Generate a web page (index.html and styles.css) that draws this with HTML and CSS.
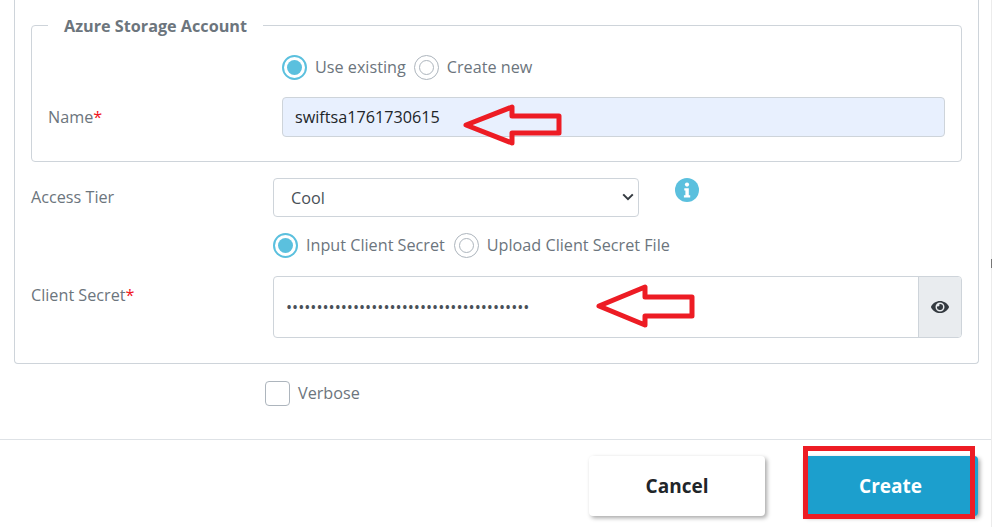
FILE: index.html
```html
<!DOCTYPE html>
<html lang="en">
<head>
<meta charset="utf-8">
<title>Azure Storage Account</title>
<link rel="stylesheet" href="styles.css">
</head>
<body>
<div class="page">
  <form class="panel">
    <fieldset class="group">
      <legend class="group-title">Azure Storage Account</legend>
      <div class="row radios radios-inner">
        <label class="radio"><span class="dot on"></span>Use existing</label>
        <label class="radio"><span class="dot"></span>Create new</label>
      </div>
      <div class="row name-row">
        <span class="label name-label">Name<span class="req">*</span></span>
        <div class="field filled">swiftsa1761730615</div>
      </div>
    </fieldset>
    <div class="row tier-row">
      <span class="label tier-label">Access Tier</span>
      <div class="select">Cool
        <svg class="chev" viewBox="0 0 12 8" width="12" height="8"><path d="M1.2 1.4 6 6.2l4.8-4.8" fill="none" stroke="#343a40" stroke-width="2"/></svg>
      </div>
      <svg class="info" viewBox="0 0 24 24" width="24" height="24"><circle cx="12" cy="12" r="12" fill="#5bc0de"/><circle cx="12" cy="6.6" r="2.1" fill="#fff"/><path d="M9.3 10.2h4.5v7h1.4v2.2H8.9v-2.2h1.5v-4.8H9.3z" fill="#fff"/></svg>
    </div>
    <div class="row radios radios-outer">
      <label class="radio"><span class="dot on"></span>Input Client Secret</label>
      <label class="radio"><span class="dot"></span>Upload Client Secret File</label>
    </div>
    <div class="row secret-row">
      <span class="label secret-label">Client Secret<span class="req">*</span></span>
      <div class="input-group">
        <div class="secret">••••••••••••••••••••••••••••••••••••••••</div>
        <div class="addon">
          <svg viewBox="0 0 576 512" width="18" height="16"><path fill="#343a40" d="M572.5 241.4C518.3 135.6 410.9 64 288 64S57.7 135.6 3.5 241.4a32.4 32.4 0 0 0 0 29.2C57.7 376.4 165.1 448 288 448s230.3-71.6 284.5-177.4a32.4 32.4 0 0 0 0-29.2zM288 400a144 144 0 1 1 144-144 143.9 143.9 0 0 1-144 144zm0-240a95.3 95.3 0 0 0-25.3 3.8 47.9 47.9 0 0 1-66.9 66.9A95.8 95.8 0 1 0 288 160z"/></svg>
        </div>
      </div>
    </div>
  </form>
  <div class="verbose">
    <span class="check"></span><span class="verbose-text">Verbose</span>
  </div>
  <footer class="footer">
    <button type="button" class="btn cancel">Cancel</button>
    <button type="button" class="btn create">Create</button>
  </footer>
  <svg class="arrow arrow-name" viewBox="0 0 110 50" width="110" height="50"><path d="M6 25 52 7v9h47v17H52v10z" fill="none" stroke="#ed1c24" stroke-width="5" stroke-linejoin="round"/></svg>
  <svg class="arrow arrow-secret" viewBox="0 0 110 50" width="110" height="50"><path d="M8 26 54 7v10h47v19H54v9z" fill="none" stroke="#ed1c24" stroke-width="5" stroke-linejoin="round"/></svg>
  <div class="highlight"></div>
  <div class="edge"><span class="edge-thumb"></span></div>
</div>
</body>
</html>
```
FILE: styles.css
```css
* { box-sizing: border-box; }
html, body { margin: 0; padding: 0; background: #fff; }
body { font-family: "Open Sans", sans-serif; font-size: 16.2px; color: #6c757d; }
.page { position: relative; width: 992px; height: 527px; overflow: hidden; }
.panel {
  margin: 0 13px 0 14px; height: 364px; padding: 13px 16px 0 16px;
  border: 1px solid #ced4da; border-top: 0; border-radius: 0 0 4px 4px;
}
.group {
  margin: 0; height: 149px; padding: 0 16px 0 16px; min-width: 0;
  border: 1px solid #ced4da; border-radius: 4px;
}
.group-title { margin-left: 0; padding: 2px 16px 0; font-weight: 700; line-height: 22px; color: #6c757d; font-size: 16.2px; }
.row { display: flex; align-items: center; }
.radios { gap: 8px; }
.radios-inner { margin: 17px 0 0 234px; height: 26px; }
.radio { display: flex; align-items: center; gap: 8px; line-height: 26px; }
.dot {
  display: flex; align-items: center; justify-content: center;
  width: 25px; height: 25px; border: 1px solid #adb5bd; border-radius: 50%; background: #fff;
}
.dot::after { content: ""; width: 13px; height: 13px; border: 1px solid #adb5bd; border-radius: 50%; }
.dot.on { border: 2px solid #5bc0de; }
.dot.on::after { width: 15px; height: 15px; border: 0; background: #5bc0de; }
.name-row { margin-top: 17px; }
.label { flex: none; }
.name-label { width: 234px; }
.req { color: #f0141e; }
.field {
  flex: 1; height: 40px; padding: 0 12px; line-height: 38px; border: 1px solid #ced4da; border-radius: 4px;
  background: #e8f0fe; color: #212529;
}
.tier-row { margin-top: 16px; align-items: flex-start; }
.tier-label { width: 242px; line-height: 38px; }
.select {
  position: relative; width: 366px; height: 39px; padding: 0 17px; line-height: 38px;
  border: 1px solid #ced4da; border-radius: 4px; color: #495057;
}
.chev { position: absolute; right: 4px; top: 14px; }
.info { margin: 0 0 0 36px; }
.radios-outer { gap: 9px; margin: 15px 0 0 242px; height: 26px; }
.secret-row { margin-top: 18px; align-items: flex-start; }
.secret-label { width: 242px; line-height: 38px; }
.input-group { flex: 1; display: flex; height: 62px; border: 1px solid #ced4da; border-radius: 4px; overflow: hidden; }
.secret { flex: 1; padding: 0 12px; line-height: 60px; color: #495057; }
.addon { width: 43px; display: flex; align-items: center; justify-content: center; background: #e9ecef; border-left: 1px solid #ced4da; }
.verbose { display: flex; align-items: center; gap: 8px; margin: 16px 0 0 265px; height: 26px; }
.check { width: 25px; height: 25px; border: 1px solid #adb5bd; border-radius: 4px; background: #fff; }
.footer {
  display: flex; justify-content: flex-end; gap: 38px; margin-top: 33px; padding: 16px 14px 0 0;
  border-top: 1px solid #dee2e6;
}
.btn {
  width: 176px; height: 60px; border: 0; border-radius: 4px; font: 700 19px "Open Sans", sans-serif;
  box-shadow: 2px 2px 4px rgba(0,0,0,.35);
}
.cancel { background: #fff; color: #212529; }
.create { width: 175px; background: #1c9fcd; color: #fff; }
.arrow { position: absolute; }
.arrow-name { left: 460px; top: 100px; }
.arrow-secret { left: 591px; top: 280px; }
.highlight { position: absolute; left: 803px; top: 446px; width: 172px; height: 73px; border: 5px solid #ed1c24; }
.edge { position: absolute; right: 0; top: 0; width: 1px; height: 527px; background: #ececec; }
.edge-thumb { position: absolute; left: 0; top: 259px; width: 1px; height: 9px; background: #777; }
```
